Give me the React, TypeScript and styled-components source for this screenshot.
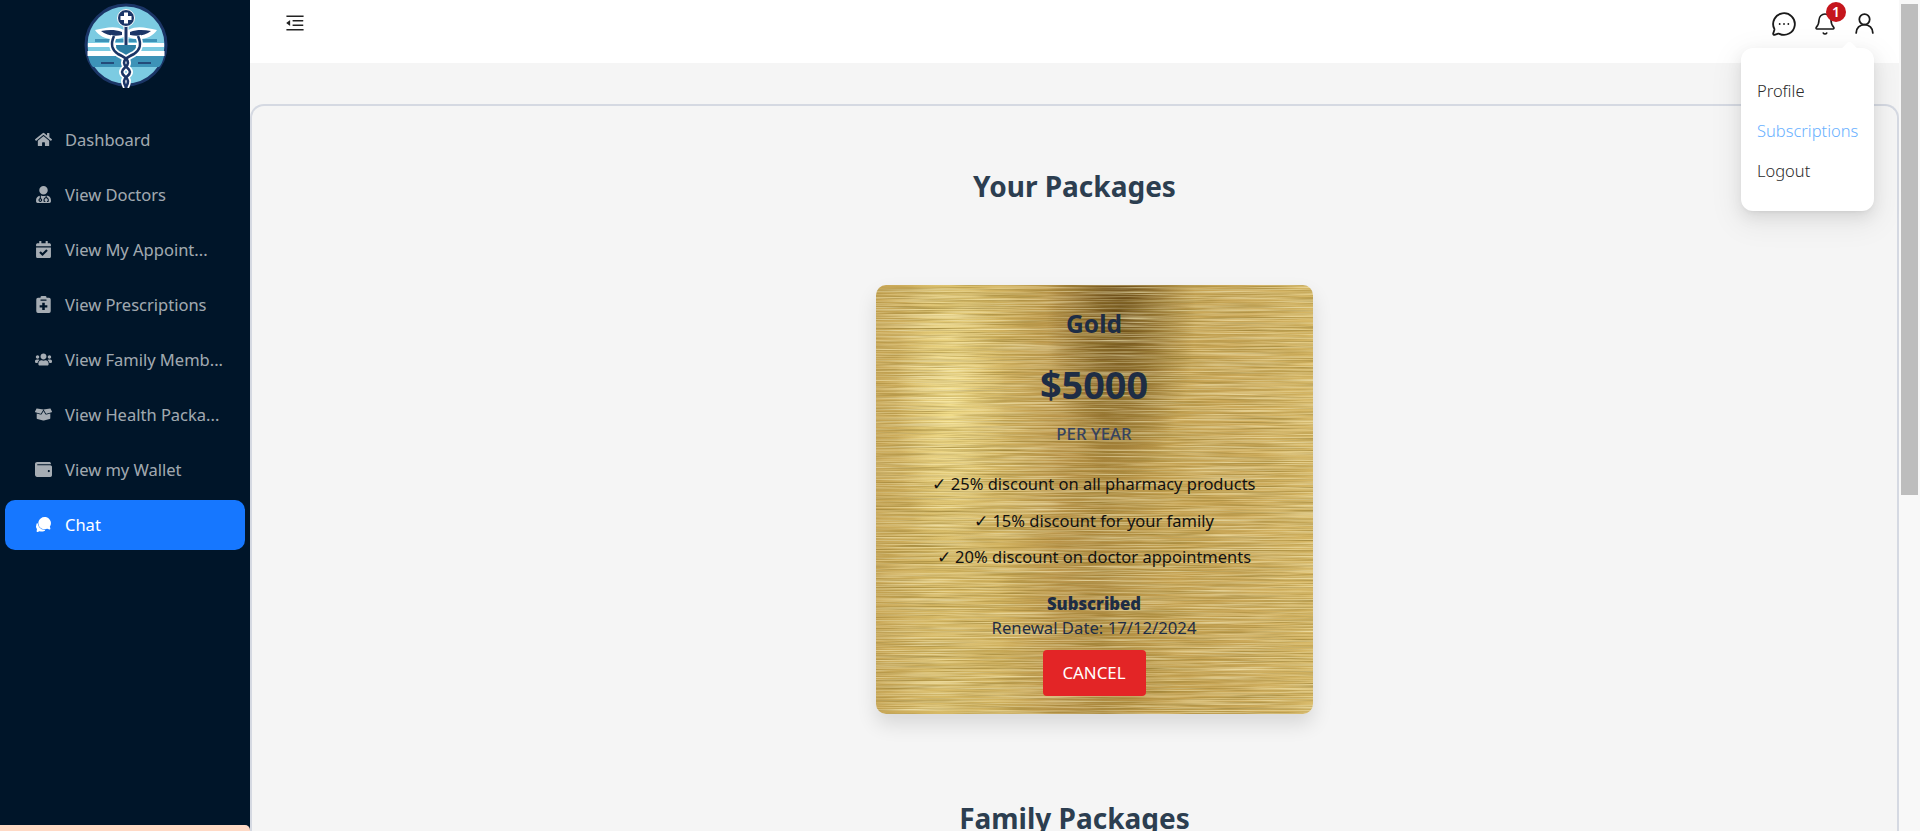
import { FC } from 'react';
import styled, { createGlobalStyle } from 'styled-components';
import { FaHome, FaUserMd, FaCalendarCheck, FaUsers, FaBoxOpen, FaWallet } from 'react-icons/fa';
import { IoChatbubbles } from 'react-icons/io5';
import { AiOutlineMenuFold } from 'react-icons/ai';
import { MessageCircleMore, Bell, UserRound } from 'lucide-react';

const brushedNoise = encodeURIComponent(
  `<svg xmlns='http://www.w3.org/2000/svg' width='437' height='429'>
    <filter id='d' x='0' y='0' width='100%' height='100%'>
      <feTurbulence type='fractalNoise' baseFrequency='0.012 1.1' numOctaves='3' seed='4'/>
      <feColorMatrix values='0 0 0 0 0.3  0 0 0 0 0.2  0 0 0 0 0.03  0 0 0 1.5 -0.6'/>
    </filter>
    <filter id='l' x='0' y='0' width='100%' height='100%'>
      <feTurbulence type='fractalNoise' baseFrequency='0.01 0.9' numOctaves='3' seed='11'/>
      <feColorMatrix values='0 0 0 0 1  0 0 0 0 0.93  0 0 0 0 0.6  0 0 0 1.3 -0.52'/>
    </filter>
    <rect width='437' height='429' filter='url(#d)'/>
    <rect width='437' height='429' filter='url(#l)'/>
  </svg>`
);

const GlobalStyle = createGlobalStyle`
  html, body {
    margin: 0;
    height: 100%;
    overflow: hidden;
    background: #f5f5f5;
    font-family: "Noto Sans", "Open Sans", sans-serif;
  }
  * { box-sizing: border-box; }
`;

const Page = styled.div`
  display: flex;
  height: 100vh;
  overflow: hidden;
`;

const Sidebar = styled.aside`
  width: 250px;
  flex: none;
  display: flex;
  flex-direction: column;
  background: #001529;
`;

const LogoBox = styled.div`
  height: 115px;
  display: flex;
  justify-content: center;
  padding: 3px 0 0 2px;
  flex: none;
`;

const Menu = styled.nav`
  display: flex;
  flex-direction: column;
  gap: 5px;
  padding: 0 5px;
`;

const MenuItem = styled.a<{ $active?: boolean }>`
  height: 50px;
  display: flex;
  align-items: center;
  gap: 13px;
  padding: 0 0 1px 30px;
  border-radius: 10px;
  font-size: 16.5px;
  color: ${(p) => (p.$active ? '#fff' : 'rgba(255,255,255,.65)')};
  background: ${(p) => (p.$active ? '#1677ff' : 'transparent')};
  > svg { flex: none; width: 17px; height: 17px; }
`;

const SideFooter = styled.div`
  margin-top: auto;
  height: 6px;
  background: #ffdac6;
  border-top-right-radius: 5px;
`;

const Main = styled.div`
  flex: 1;
  min-width: 0;
  display: flex;
  flex-direction: column;
`;

const TopBar = styled.header`
  height: 63px;
  flex: none;
  background: #fff;
  display: flex;
  align-items: flex-start;
  justify-content: space-between;
  padding: 12px 23.5px 0 34px;
`;

const ToggleButton = styled.div`
  width: 22px;
  height: 22px;
  color: #222;
  font-size: 22px;
  line-height: 0;
`;

const TopIcons = styled.div`
  position: relative;
  display: flex;
  gap: 16px;
  color: #1a1a1a;
`;

const IconSlot = styled.div<{ $size?: number; $trail?: number }>`
  position: relative;
  width: 23px;
  height: 23px;
  margin-right: ${(p) => p.$trail || 0}px;
  display: flex;
  align-items: center;
  justify-content: center;
  > svg { flex: none; width: ${(p) => p.$size || 25}px; height: ${(p) => p.$size || 25}px; display: block; }
`;

const Badge = styled.span`
  position: absolute;
  top: -10px;
  right: -9.500px;
  width: 20px;
  height: 20px;
  border-radius: 50%;
  background: #c5161d;
  color: #fff;
  font-size: 14px;
  font-weight: 600;
  line-height: 20px;
  text-align: center;
`;

const Dropdown = styled.div`
  position: absolute;
  top: 36px;
  right: 1.5px;
  width: 133px;
  height: 163px;
  padding: 31px 0 0 16px;
  background: #fff;
  border-radius: 12px;
  box-shadow: 0 6px 16px rgba(0,0,0,.08), 0 3px 6px -4px rgba(0,0,0,.12), 0 9px 28px 8px rgba(0,0,0,.05);
  display: flex;
  flex-direction: column;
  gap: 17px;
  z-index: 5;
  &::before {
    content: '';
    position: absolute;
    top: -5px;
    right: 19px;
    width: 11px;
    height: 11px;
    background: #fff;
    transform: rotate(45deg);
    border-top-left-radius: 3px;
  }
`;

const DropdownItem = styled.a<{ $active?: boolean }>`
  font-size: 16.5px;
  font-weight: 300;
  line-height: 23px;
  white-space: nowrap;
  color: ${(p) => (p.$active ? '#69b1ff' : '#2b2b2b')};
`;

const Content = styled.main`
  flex: 1;
  min-height: 0;
  padding-top: 41px;
  background: #f5f5f5;
`;

const Panel = styled.section`
  border: 2px solid #d5d9e2;
  border-bottom: none;
  border-radius: 14px 14px 0 0;
  height: 100%;
  overflow: hidden;
  display: flex;
  flex-direction: column;
  align-items: center;
  padding-top: 60px;
`;

const SectionTitle = styled.h2`
  margin: 0;
  font-size: 28px;
  line-height: 40px;
  font-weight: 700;
  color: #2c3e50;
  white-space: nowrap;
`;

const PlanCard = styled.article`
  flex: none;
  width: 437px;
  height: 429px;
  margin: 79px 0 84px 39px;
  padding: 23px 0 0;
  border-radius: 10px;
  box-shadow: 0 10px 20px rgba(0,0,0,.12);
  text-align: center;
  color: #1e2d45;
  background:
    url("data:image/svg+xml,${brushedNoise}"),
    radial-gradient(ellipse 75px 170px at 56% 6%, rgba(96,66,16,.9), rgba(96,66,16,0) 100%),
    radial-gradient(ellipse 55px 160px at 17% 27%, rgba(250,232,150,.8), rgba(250,232,150,0) 100%),
    linear-gradient(90deg, #c8a656 0%, #d6b966 14%, #d2b360 28%, #b99348 42%, #ae8a3f 52%, #c5a252 68%, #cba95a 84%, #d6b765 100%);
`;

const PlanName = styled.h3`
  margin: 0;
  font-size: 24.5px;
  line-height: 32px;
  font-weight: 700;
`;

const PlanPrice = styled.div`
  margin-top: 20px;
  font-size: 37.8px;
  line-height: 50px;
  font-weight: 700;
`;

const PlanPeriod = styled.div`
  margin-top: 14px;
  font-size: 16.8px;
  font-weight: 500;
  line-height: 20px;
  color: #36435f;
`;

const Perks = styled.ul`
  list-style: none;
  margin: 29px 0 0;
  padding: 0;
  display: flex;
  flex-direction: column;
  gap: 14px;
`;

const Perk = styled.li`
  font-size: 16.5px;
  line-height: 22.5px;
  color: #111;
`;

const Subscribed = styled.div`
  margin-top: 24px;
  font-size: 16.7px;
  line-height: 22px;
  font-weight: 900;
`;

const Renewal = styled.div`
  margin-top: 2px;
  font-size: 16.7px;
  line-height: 22px;
`;

const CancelButton = styled.button`
  display: block;
  width: 103px;
  height: 46px;
  margin: 11px auto 0;
  border: none;
  border-radius: 4px;
  background: #e32526;
  color: #fff;
  font: inherit;
  font-size: 16.9px;
`;

const ScrollRail = styled.div`
  width: 21px;
  flex: none;
  background: #f8f8f8;
  padding: 4px 2px 0;
`;

const ScrollThumb = styled.div`
  height: 491px;
  background: #bdbdbd;
`;

const ClipboardPlus: FC = () => (
  <svg viewBox="0 0 17 20" fill="currentColor">
    <path fillRule="evenodd" d="M5 1.5A1.5 1.5 0 0 1 6.5 0h4A1.5 1.5 0 0 1 12 1.5V2h3a2 2 0 0 1 2 2v14a2 2 0 0 1-2 2H2a2 2 0 0 1-2-2V4a2 2 0 0 1 2-2h3zM5 4v1.5h7V4zM7 8v3H4v2.4h3v3h3v-3h3V11h-3V8z" />
  </svg>
);

const snakeLeft = 'M30 33c-4 9-2 14 4 18 6 3 10 5 10 9s-6 5-6 9 6 5 6 9-2 5-2 7';
const snakeRight = 'M54 33c4 9 2 14-4 18-6 3-10 5-10 9s6 5 6 9-6 5-6 9 2 5 2 7';

const Logo: FC = () => (
  <svg width="84" height="90" viewBox="0 0 84 90">
    <circle cx="42" cy="42" r="40" fill="#7ccbe2" stroke="#1b3566" strokeWidth="3" />
    <path d="M11 36h62v3H11z" fill="#3d93b8" />
    <path d="M4 40h76v4H4zM3.500 48h77v5h-77z" fill="#fff" />
    <path d="M4 44h76v4H4z" fill="#7ccbe2" />
    <path d="M4 53h76c-1 5-3 9-5 11H9c-2-2-4-6-5-11z" fill="#3d93b8" />
    <path d="M17 60h13M54 60h13" stroke="#1b3566" strokeWidth="1.6" />
    <path d="M40 27C30 22 22 25 11 27c5 8 17 12 29 7zM44 27c10-5 18-2 29 0-5 8-17 12-29 7z" fill="#fff" />
    <path d="M38 29C30 26 24 27 17 28c5 4 13 6 21 4zM46 29c8-3 14-2 21-1-5 4-13 6-21 4z" fill="#1b3566" />
    <path d="M39.500 20h5v24h-5z" fill="#fff" />
    <path d="M40.500 20h3v24h-3z" fill="#1b3566" />
    <circle cx="42" cy="15" r="8.500" fill="#1b3566" stroke="#fff" strokeWidth="1" />
    <path d="M40 9.500h4v3.500h3.500v4H44v3.500h-4V17h-3.500v-4H40z" fill="#fff" />
    <path d="M32 42h20c0 8-5 11-10 11s-10-3-10-11" fill="#2d7ea3" />
    <path d={snakeLeft} fill="none" stroke="#fff" strokeWidth="6" />
    <path d={snakeRight} fill="none" stroke="#fff" strokeWidth="6" />
    <path d={snakeLeft} fill="none" stroke="#1b3566" strokeWidth="2.6" />
    <path d={snakeRight} fill="none" stroke="#1b3566" strokeWidth="2.6" />
  </svg>
);

const menuItems = [
  { label: 'Dashboard', icon: <FaHome /> },
  { label: 'View Doctors', icon: <FaUserMd /> },
  { label: 'View My Appoint...', icon: <FaCalendarCheck /> },
  { label: 'View Prescriptions', icon: <ClipboardPlus /> },
  { label: 'View Family Memb...', icon: <FaUsers /> },
  { label: 'View Health Packa...', icon: <FaBoxOpen /> },
  { label: 'View my Wallet', icon: <FaWallet /> },
  { label: 'Chat', icon: <IoChatbubbles />, active: true },
];

const perks = [
  '✓ 25% discount on all pharmacy products',
  '✓ 15% discount for your family',
  '✓ 20% discount on doctor appointments',
];

export default function App() {
  return (
    <Page>
      <GlobalStyle />
      <Sidebar>
        <LogoBox><Logo /></LogoBox>
        <Menu>
          {menuItems.map((item) => (
            <MenuItem key={item.label} $active={item.active}>
              {item.icon}
              {item.label}
            </MenuItem>
          ))}
        </Menu>
        <SideFooter />
      </Sidebar>
      <Main>
        <TopBar>
          <ToggleButton><AiOutlineMenuFold /></ToggleButton>
          <TopIcons>
            <IconSlot $size={26} $trail={2.5}><MessageCircleMore strokeWidth={1.7} /></IconSlot>
            <IconSlot $size={24}>
              <Bell strokeWidth={1.6} />
              <Badge>1</Badge>
            </IconSlot>
            <IconSlot><UserRound strokeWidth={1.7} /></IconSlot>
            <Dropdown>
              <DropdownItem>Profile</DropdownItem>
              <DropdownItem $active>Subscriptions</DropdownItem>
              <DropdownItem>Logout</DropdownItem>
            </Dropdown>
          </TopIcons>
        </TopBar>
        <Content>
          <Panel>
            <SectionTitle>Your Packages</SectionTitle>
            <PlanCard>
              <PlanName>Gold</PlanName>
              <PlanPrice>$5000</PlanPrice>
              <PlanPeriod>PER YEAR</PlanPeriod>
              <Perks>
                {perks.map((perk) => <Perk key={perk}>{perk}</Perk>)}
              </Perks>
              <Subscribed>Subscribed</Subscribed>
              <Renewal>Renewal Date: 17/12/2024</Renewal>
              <CancelButton>CANCEL</CancelButton>
            </PlanCard>
            <SectionTitle>Family Packages</SectionTitle>
          </Panel>
        </Content>
      </Main>
      <ScrollRail><ScrollThumb /></ScrollRail>
    </Page>
  );
}
